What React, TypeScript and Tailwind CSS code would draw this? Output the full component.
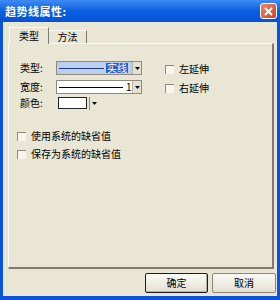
import React from "react";

const font = { fontFamily: '"Noto Sans CJK SC", "Liberation Sans", sans-serif' };

function Arrow() {
  return (
    <svg width="5" height="3" viewBox="0 0 5 3">
      <path d="M0 0h5L2.5 3z" fill="#000" />
    </svg>
  );
}

function DropButton() {
  return (
    <div className="w-[9px] h-full shrink-0 flex items-center justify-center bg-[#e4e1d4] border-l border-[#b9b6a8]">
      <Arrow />
    </div>
  );
}

function CheckBox({ label }: { label: string }) {
  return (
    <div className="flex items-center h-[10px]">
      <div className="w-[9px] h-[9px] bg-[#f6f5ee] border-l border-t border-[#8d8b80] border-r-[#ffffff] border-b-[#ffffff]" />
      <span className="ml-[5px] text-[10px] leading-none text-black whitespace-nowrap">{label}</span>
    </div>
  );
}

export default function App() {
  return (
    <div className="w-[280px] h-[300px] flex flex-col bg-[#0b54d6] overflow-hidden" style={font}>
      {/* title bar */}
      <div className="h-[22px] flex items-center justify-between pl-[5px] pr-[3px] bg-gradient-to-b from-[#3f8cf3] via-[#0b5ee2] to-[#0652d4]">
        <span className="text-[11px] font-bold text-white leading-none tracking-[0.5px]">趋势线属性:</span>
        <div className="w-[17px] h-[16px] rounded-[3px] border border-white bg-gradient-to-br from-[#e9876b] to-[#cf3d1e] flex items-center justify-center">
          <svg width="9" height="9" viewBox="0 0 9 9">
            <path d="M1 1l7 7M8 1l-7 7" stroke="#fff" strokeWidth="2" />
          </svg>
        </div>
      </div>

      {/* body */}
      <div className="flex-1 mx-[3px] mb-[4px] bg-[#e9e6d5] flex flex-col pl-[5px] pr-[3px] pt-[5px]">
        {/* tabs */}
        <div className="h-[16px] flex items-end relative z-10">
          <div className="ml-[1px] w-[40px] h-[17px] mb-[-1px] bg-[#e9e6d5] border-t border-l border-[#fcfcf8] border-r border-r-[#807c6c] flex items-center justify-center">
            <span className="text-[10px] leading-none text-black">类型</span>
          </div>
          <div className="w-[38px] h-[13px] border-t border-r border-[#fcfcf8] border-r-[#807c6c] flex items-center justify-center">
            <span className="text-[10px] leading-none text-black">方法</span>
          </div>
        </div>

        {/* panel */}
        <div className="h-[226px] border border-[#fcfcf8] border-r-[#807c6c] border-b-[#807c6c] border-r-2 border-b-2 flex flex-col pl-[11px] pt-[17px]">
          <div className="flex">
            <div className="flex flex-col">
              <div className="flex items-center h-[14px]">
                <span className="w-[36px] text-[10px] leading-none text-black">类型:</span>
                <div className="w-[86px] h-[14px] border border-[#8e8b7e] flex bg-[#bccfee]">
                  <div className="flex-1 flex items-center pl-[2px]">
                    <div className="w-[45px] h-px shrink-0 bg-[#203c78]" />
                    <span className="ml-[2px] shrink-0 whitespace-nowrap h-[10px] px-[1px] bg-[#2f5fc0] text-white text-[10px] leading-[10px]">实线</span>
                  </div>
                  <DropButton />
                </div>
              </div>
              <div className="flex items-center h-[14px] mt-[5px]">
                <span className="w-[36px] text-[10px] leading-none text-black">宽度:</span>
                <div className="w-[86px] h-[14px] border border-[#8e8b7e] flex bg-white">
                  <div className="flex-1 flex items-center pl-[2px]">
                    <div className="w-[64px] h-px bg-black" />
                    <span className="ml-[3px] text-[10px] leading-none text-black">1</span>
                  </div>
                  <DropButton />
                </div>
              </div>
              <div className="flex items-center h-[14px] mt-[2px]">
                <span className="w-[36px] text-[10px] leading-none text-black">颜色:</span>
                <div className="h-[14px] flex items-center">
                  <div className="ml-[2px] w-[29px] h-[12px] border border-[#222] bg-white" />
                  <div className="ml-[2px] w-px h-[13px] bg-[#8e8b7e]" />
                  <div className="ml-[2px] flex items-center">
                    <Arrow />
                  </div>
                </div>
              </div>
            </div>
            <div className="ml-[23px] flex flex-col">
              <div className="h-[14px] flex items-center mt-[1px]">
                <CheckBox label="左延伸" />
              </div>
              <div className="h-[14px] flex items-center mt-[5px]">
                <CheckBox label="右延伸" />
              </div>
            </div>
          </div>

          <div className="-ml-[3px] mt-[21px] flex flex-col gap-[8px]">
            <CheckBox label="使用系统的缺省值" />
            <CheckBox label="保存为系统的缺省值" />
          </div>
        </div>

        {/* buttons */}
        <div className="mt-[4px] flex justify-end gap-[4px] -mr-[2px]">
          <button className="w-[63px] h-[20px] border border-[#1d1d1d] rounded-[2px] bg-gradient-to-b from-[#fbfbf7] to-[#e3e0d2] shadow-[inset_-1px_-1px_0_#b5b2a4] text-[10px] leading-none text-black">
            确定
          </button>
          <button className="w-[64px] h-[20px] border border-[#8a877a] rounded-[2px] bg-gradient-to-b from-[#fbfbf7] to-[#e3e0d2] text-[10px] leading-none text-black">
            取消
          </button>
        </div>
      </div>
    </div>
  );
}
